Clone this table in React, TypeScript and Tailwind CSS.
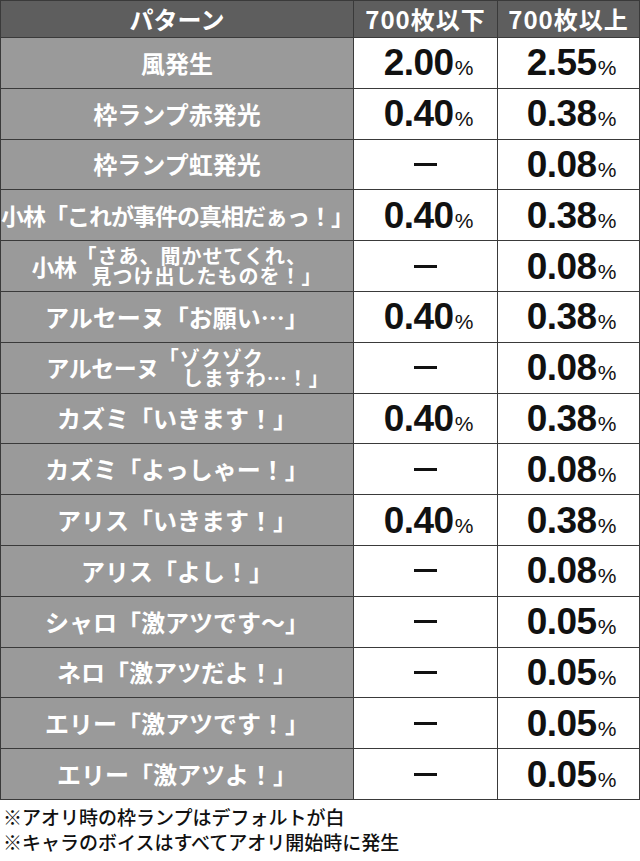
const jp = "font-['Noto_Sans_CJK_JP',sans-serif]";

type Row = {
  label: React.ReactNode;
  low: string | null;
  high: string;
};

const rows: Row[] = [
  { label: "風発生", low: "2.00", high: "2.55" },
  { label: "枠ランプ赤発光", low: "0.40", high: "0.38" },
  { label: "枠ランプ虹発光", low: null, high: "0.08" },
  { label: <span className="text-[23px] tracking-[-1px]">小林「これが事件の真相だぁっ！」</span>, low: "0.40", high: "0.38" },
  {
    label: <TwoLine name="小林" first="「さあ、聞かせてくれ、" second="見つけ出したものを！」" indent="pl-[15px]" shift="ml-0" />,
    low: null,
    high: "0.08",
  },
  { label: "アルセーヌ「お願い…」", low: "0.40", high: "0.38" },
  {
    label: <TwoLine name="アルセーヌ" first="「ゾクゾク" second="しますわ…！」" indent="pl-[24px]" shift="ml-[22px]" />,
    low: null,
    high: "0.08",
  },
  { label: "カズミ「いきます！」", low: "0.40", high: "0.38" },
  { label: "カズミ「よっしゃー！」", low: null, high: "0.08" },
  { label: "アリス「いきます！」", low: "0.40", high: "0.38" },
  { label: "アリス「よし！」", low: null, high: "0.08" },
  { label: "シャロ「激アツです〜」", low: null, high: "0.05" },
  { label: "ネロ「激アツだよ！」", low: null, high: "0.05" },
  { label: "エリー「激アツです！」", low: null, high: "0.05" },
  { label: "エリー「激アツよ！」", low: null, high: "0.05" },
];

function TwoLine({ name, first, second, indent, shift }: { name: string; first: string; second: string; indent: string; shift: string }) {
  return (
    <div className={`flex items-center ${shift}`}>
      <span className="text-[23px] tracking-[-0.5px]">{name}</span>
      <div className="flex flex-col text-[20px] tracking-[1px] leading-[20px] text-left">
        <span>{first}</span>
        <span className={indent}>{second}</span>
      </div>
    </div>
  );
}

function Value({ v }: { v: string | null }) {
  if (v === null) {
    return (
      <div className="bg-white flex items-center justify-center">
        <div className="w-[23px] h-[3px] bg-[#111]" />
      </div>
    );
  }
  return (
    <div className="bg-white flex items-center justify-center pl-[6px]">
      <span className="font-['Liberation_Sans',Arial,sans-serif] font-bold text-[37px] leading-none text-[#111] tracking-[-0.5px]">
        {v}
      </span>
      <span className="font-['Liberation_Sans',Arial,sans-serif] text-[21px] leading-none text-[#111] mt-[10px] ml-[1px]">%</span>
    </div>
  );
}

export default function App() {
  return (
    <div className="w-[640px] h-[861px] bg-white">
      <div className="grid grid-cols-[352px_143px_141px] grid-rows-[36px_repeat(15,1fr)] gap-px h-[800px] bg-[#3a3a3a] border border-[#3a3a3a]">
        <div className={`bg-[#5e5e5e] text-white font-bold text-[24px] flex items-center justify-center ${jp}`}>パターン</div>
        <div className={`bg-[#5e5e5e] text-white font-bold text-[24px] tracking-[1px] flex items-center justify-center ${jp}`}>700枚以下</div>
        <div className={`bg-[#5e5e5e] text-white font-bold text-[24px] tracking-[1px] flex items-center justify-center ${jp}`}>700枚以上</div>
        {rows.map((r, i) => (
          <Cells key={i} row={r} />
        ))}
      </div>
      <div className={`pl-[3px] pt-[4px] text-[19px] leading-[25px] text-[#111] font-medium ${jp}`}>
        <p>※アオリ時の枠ランプはデフォルトが白</p>
        <p>※キャラのボイスはすべてアオリ開始時に発生</p>
      </div>
    </div>
  );
}

function Cells({ row }: { row: Row }) {
  return (
    <>
      <div className={`bg-[#9a9a9a] text-white font-bold text-[24px] leading-none flex items-center justify-center whitespace-nowrap ${jp}`}>
        {row.label}
      </div>
      <Value v={row.low} />
      <Value v={row.high} />
    </>
  );
}
